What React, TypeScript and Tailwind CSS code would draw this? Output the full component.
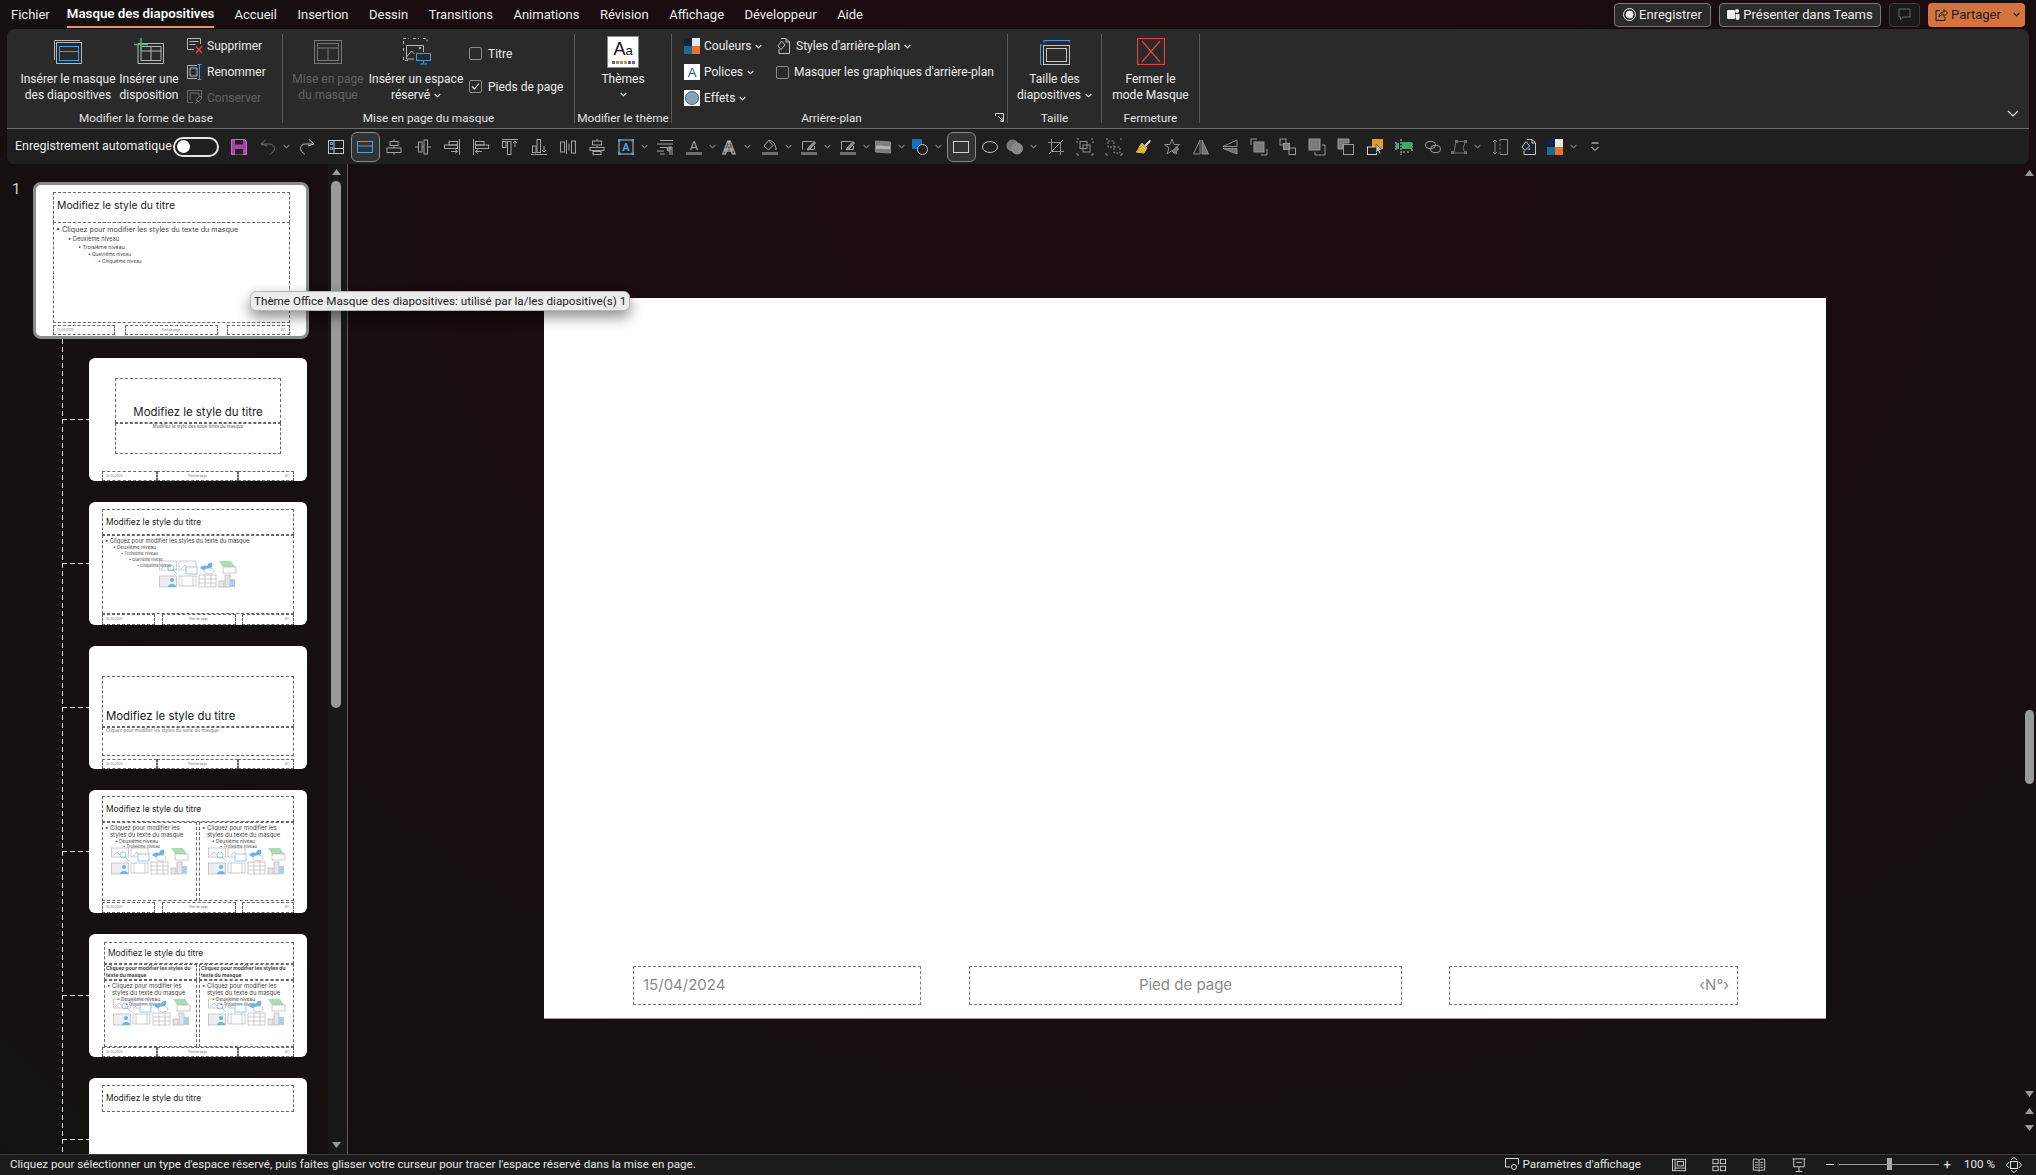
import type { ReactNode } from "react";

const tabs = ["Accueil", "Insertion", "Dessin", "Transitions", "Animations", "Révision", "Affichage", "Développeur", "Aide"];

const Ico = ({ children, size = 16, c = "#a3a3a3" }: { children: ReactNode; size?: number; c?: string }) => (
  <svg width={size} height={size} viewBox="0 0 16 16" fill="none" stroke={c} strokeWidth="1" className="shrink-0 overflow-visible">
    {children}
  </svg>
);

const Chevron = ({ c = "#e6e6e6" }: { c?: string }) => (
  <svg width="7" height="5" viewBox="0 0 7 5" fill="none" stroke={c} strokeWidth="1.1" className="shrink-0">
    <path d="M0.7 1l2.8 2.8L6.3 1" />
  </svg>
);

const Bar = () => <rect x="0" y="13" width="16" height="3" fill="#6f6f6f" stroke="none" />;

const Pencil = () => (
  <>
    <path d="M1.5 10.5v-8h10M13.5 7v3.5h-7" />
    <path d="M7 9l6-6.5 1.5 1.5-6 6.5-2 .5z" fill="#888" />
    <Bar />
  </>
);

type Tool = { icon: ReactNode; cls?: string; chev?: string; on?: boolean };

const tools: Tool[] = [
  {
    icon: (
      <Ico c="#c66fc6">
        <path d="M.5.5h13l2 2v13H.5z" fill="#a544a5" />
        <rect x="4" y="1" width="8" height="4.5" fill="#1f1f1f" stroke="none" />
        <rect x="4" y="10" width="8" height="5.5" fill="#1f1f1f" stroke="none" />
      </Ico>
    ),
  },
  {
    icon: (
      <Ico c="#6f6f6f">
        <path d="M6 .5L1 5l6 2M1.5 5h8c3 0 5 2 5 4.5 0 2-2 4-4.5 6" />
      </Ico>
    ),
    chev: "w-[10px]",
  },
  {
    icon: (
      <Ico c="#bdbdbd">
        <path d="M10 .5L15 5l-6 2M14.5 5h-8c-3 0-5 2-5 4.5 0 2 2 4 4.5 6" />
      </Ico>
    ),
  },
  {
    icon: (
      <Ico c="#c4c4c4">
        <rect x=".5" y="1.5" width="15" height="13" />
        <path d="M6 1.5v13M6 9.5h9.5" />
        <rect x="2.5" y="3.5" width="2" height="2" stroke="#4aa3e0" />
        <rect x="2.5" y="8.5" width="2" height="2" stroke="#4aa3e0" />
      </Ico>
    ),
  },
  {
    icon: (
      <Ico c="#4aa3e0">
        <rect x=".5" y="2.5" width="15" height="11" />
        <path d="M.5 7h15" />
      </Ico>
    ),
    on: true,
  },
  {
    icon: (
      <Ico>
        <path d="M8 0v16" />
        <rect x="4" y="2.5" width="8" height="4" fill="#1f1f1f" />
        <rect x="1" y="9" width="14" height="4.5" fill="#1f1f1f" />
      </Ico>
    ),
  },
  {
    icon: (
      <Ico>
        <path d="M0 8h16" />
        <rect x="3.5" y="3" width="3.5" height="10" fill="#1f1f1f" />
        <rect x="9" y="1" width="3.5" height="14" fill="#1f1f1f" />
      </Ico>
    ),
  },
  {
    icon: (
      <Ico>
        <path d="M15.5 0v16" />
        <rect x="5" y="2.5" width="8.5" height="3.5" />
        <rect x="0.5" y="6" width="13" height="3.5" />
        <path d="M7 12.5h6.5M11 10.5l2.5 2-2.5 2" />
      </Ico>
    ),
  },
  {
    icon: (
      <Ico>
        <path d="M.5 0v16" />
        <rect x="2.5" y="2.5" width="8.5" height="3.5" />
        <rect x="2.5" y="6" width="13" height="3.5" />
        <path d="M9 12.5H2.5M5 10.5l-2.5 2 2.5 2" />
      </Ico>
    ),
  },
  {
    icon: (
      <Ico>
        <path d="M0 .5h16" />
        <rect x=".5" y="2.5" width="3.5" height="6" />
        <rect x="5.5" y="2.5" width="3.5" height="13" />
        <path d="M13 8V2M11 4l2-2 2 2" />
      </Ico>
    ),
  },
  {
    icon: (
      <Ico>
        <path d="M0 15.5h16" />
        <rect x="1.5" y="7" width="3.5" height="6.5" />
        <rect x="6" y=".5" width="3.5" height="13" />
        <path d="M13 7v6M11 11l2 2 2-2" />
      </Ico>
    ),
  },
  {
    icon: (
      <Ico>
        <rect x=".5" y="3" width="4" height="10" />
        <rect x="11.5" y="2" width="4" height="12" />
        <path d="M6.5 1v14M9 4.5v7" />
      </Ico>
    ),
  },
  {
    icon: (
      <Ico>
        <path d="M8 0v2M8 7v2M8 15v1" />
        <rect x="3.5" y="2" width="9" height="4" />
        <rect x="1" y="8.5" width="14" height="3" />
        <rect x="4" y="12.5" width="8" height="3" />
      </Ico>
    ),
  },
  {
    icon: (
      <Ico c="#bbbbbb">
        <rect x="1" y="1" width="14" height="14" />
        <text x="8" y="12" textAnchor="middle" fontSize="11" fontWeight="700" fill="#4aa3e0" stroke="none">A</text>
        <g fill="#4aa3e0" stroke="none">
          <rect x="0" y="0" width="2.5" height="2.5" />
          <rect x="13.5" y="0" width="2.5" height="2.5" />
          <rect x="0" y="13.5" width="2.5" height="2.5" />
          <rect x="13.5" y="13.5" width="2.5" height="2.5" />
        </g>
      </Ico>
    ),
    chev: "w-[10px]",
  },
  {
    icon: (
      <Ico>
        <path d="M3 1.5h13M0 5h16M3 8.5h7M0 12h7M3 15h5" />
        <path d="M15 8v8M13 8v8M15 8h-3a2 2 0 000 4h1" fill="#777" />
      </Ico>
    ),
  },
  {
    icon: (
      <Ico>
        <text x="8" y="11" textAnchor="middle" fontSize="13" fill="#a3a3a3" stroke="none">A</text>
        <Bar />
      </Ico>
    ),
    chev: "w-[6px]",
  },
  {
    icon: (
      <Ico>
        <text x="8" y="14.5" textAnchor="middle" fontSize="19" fontWeight="700" fill="#555" stroke="#b5b5b5" strokeWidth=".8">A</text>
      </Ico>
    ),
    chev: "w-[12px]",
  },
  {
    icon: (
      <Ico>
        <path d="M6.5 1.5L2 7l4.5 4L11 6.5z" />
        <path d="M7 1.5c3 0 6 2 6.5 6.5" />
        <path d="M13.5 8c.8 1 1.2 1.8 0 3" fill="#a3a3a3" />
        <Bar />
      </Ico>
    ),
    chev: "w-[10px]",
  },
  {
    icon: (
      <Ico>
        <Pencil />
      </Ico>
    ),
    chev: "w-[10px]",
  },
  {
    icon: (
      <Ico>
        <Pencil />
      </Ico>
    ),
    chev: "w-[6px]",
  },
  {
    icon: (
      <Ico c="#8a8a8a">
        <path d="M.5 2L15.5 3v11L.5 13z" fill="#7d7d7d" />
        <path d="M1 7c3-2 7 1 14 0v3c-5 1-10-1-14 0z" fill="#b3b3b3" stroke="none" />
      </Ico>
    ),
    chev: "w-[8px]",
  },
  {
    icon: (
      <Ico c="#c4c4c4">
        <rect x="0" y="0" width="10" height="10" fill="#1270c9" stroke="none" />
        <circle cx="10.5" cy="10.5" r="5" fill="#1f1f1f" />
      </Ico>
    ),
    chev: "w-[12px]",
  },
  {
    icon: (
      <Ico c="#cfcfcf">
        <rect x=".5" y="2.5" width="15" height="11" />
      </Ico>
    ),
    on: true,
  },
  {
    icon: (
      <Ico c="#bdbdbd">
        <ellipse cx="8" cy="8" rx="7.5" ry="5.5" />
      </Ico>
    ),
  },
  {
    icon: (
      <Ico c="#8a8a8a">
        <circle cx="5.5" cy="6.5" r="5.5" fill="#777" />
        <circle cx="10" cy="9.5" r="5.5" fill="#888" />
      </Ico>
    ),
    cls: "-ml-[4px]",
    chev: "w-[12px]",
  },
  {
    icon: (
      <Ico c="#8f8f8f">
        <path d="M3.5 0v12.5H16M0 3.5h12.5V16M1 15L15 1" />
      </Ico>
    ),
  },
  {
    icon: (
      <Ico c="#8f8f8f">
        <rect x="3" y="2.5" width="7" height="7" />
        <rect x="6" y="6" width="7" height="7" />
        <path d="M0 0h2M14 0h2M0 14v2h2M14 16h2v-2M0 2v2M16 2v2" />
      </Ico>
    ),
  },
  {
    icon: (
      <Ico c="#8f8f8f">
        <rect x="2" y="2" width="6" height="6" strokeDasharray="2 1.5" />
        <rect x="8" y="8" width="6" height="6" strokeDasharray="2 1.5" />
        <path d="M0 0h2M14 0h2M0 14v2h2M14 16h2v-2" />
      </Ico>
    ),
  },
  {
    icon: (
      <Ico c="#cfcfcf">
        <path d="M10 6l5-5 0 2-4.5 4.5z" fill="#cfcfcf" />
        <path d="M7 4l5 5-3 5-8-1c3-2 3-6 6-9z" fill="#e2b23c" stroke="#e2b23c" />
        <path d="M6 6l4 4" stroke="#fff" />
      </Ico>
    ),
  },
  {
    icon: (
      <Ico c="#8f8f8f">
        <path d="M8 0l2 5.5h5.5L11 9l1.8 6L8 11.5 3 15l2-6L.5 5.5H6z" />
        <path d="M8 12l5-4 1.5 2-4 4.5z" fill="#6f6f6f" />
      </Ico>
    ),
  },
  {
    icon: (
      <Ico c="#8f8f8f">
        <path d="M7 1L.5 15H7z" />
        <path d="M9 1l6.5 14H9z" fill="#6f6f6f" />
      </Ico>
    ),
  },
  {
    icon: (
      <Ico c="#8f8f8f">
        <path d="M15 1L1 7.5h14z" />
        <path d="M15 9.5L1 9.5 15 15z" fill="#6f6f6f" />
      </Ico>
    ),
  },
  {
    icon: (
      <Ico c="#9a9a9a">
        <path d="M0 6V0h6M10 16h6v-6" />
        <rect x="3" y="3" width="10" height="10" fill="#7a7a7a" />
      </Ico>
    ),
  },
  {
    icon: (
      <Ico c="#9a9a9a">
        <rect x="0" y="0" width="6" height="6" />
        <rect x="3.5" y="4.5" width="6" height="6" fill="#7a7a7a" />
        <rect x="9" y="9" width="6.5" height="6.5" />
      </Ico>
    ),
  },
  {
    icon: (
      <Ico c="#9a9a9a">
        <rect x="0" y="0" width="11" height="11" fill="#7a7a7a" />
        <path d="M13 6h3v10H6v-3" />
      </Ico>
    ),
  },
  {
    icon: (
      <Ico c="#9a9a9a">
        <path d="M0 10V0h11v4H5v6z" fill="#7a7a7a" />
        <rect x="5.5" y="5.5" width="10" height="10" />
      </Ico>
    ),
  },
  {
    icon: (
      <Ico c="#d0d0d0">
        <rect x="5" y="0" width="11" height="10" fill="#e59a2d" stroke="none" />
        <rect x=".5" y="8" width="9" height="7.5" fill="#1f1f1f" />
        <path d="M9 5l6 6-2.5.3 1.5 3-1.5.7-1.5-3-2 2z" fill="#bdbdbd" stroke="#1f1f1f" strokeWidth=".5" />
      </Ico>
    ),
  },
  {
    icon: (
      <Ico c="#d0d0d0">
        <path d="M5 0v16M0 3v9M16 4v8M8 12v2M12 12v2" strokeDasharray="2 1" />
        <rect x="6" y="3" width="10" height="7" fill="#3eaa62" stroke="none" />
        <rect x="0" y="4" width="3" height="6" fill="#3eaa62" stroke="none" />
      </Ico>
    ),
  },
  {
    icon: (
      <Ico c="#9a9a9a">
        <rect x=".5" y="2.5" width="10" height="7" rx="3.5" />
        <rect x="5.5" y="6.5" width="10" height="7" rx="3.5" />
      </Ico>
    ),
  },
  {
    icon: (
      <Ico c="#6f6f6f">
        <path d="M3 13.5L5 2.5h8M14 4l-2 5 2 5H3" />
        <g fill="#6f6f6f" stroke="none">
          <rect x="0" y="12" width="3" height="3" />
          <rect x="4" y="1" width="3" height="3" />
          <rect x="13" y="1" width="3" height="3" />
          <rect x="13" y="12" width="3" height="3" />
        </g>
      </Ico>
    ),
    cls: "-ml-[3px]",
    chev: "w-[12px]",
  },
  {
    icon: (
      <Ico c="#8a8a8a">
        <path d="M3 1v14M1 3l2-2 2 2M1 13l2 2 2-2" />
        <path d="M8 .5h7.5v15H8" />
        <path d="M8 .5v15" strokeDasharray="2 2" />
      </Ico>
    ),
  },
  {
    icon: (
      <Ico c="#c4c4c4">
        <path d="M7 .5h5l3.5 3.5v11.500H4V12" />
        <path d="M12 .5V4h3.5" />
        <path d="M6 2.5L2 8l3 3.500L9.5 7z" fill="#1f1f1f" />
        <path d="M7 11l3-3 .5 3z" fill="#2f8fe0" stroke="none" />
      </Ico>
    ),
    cls: "-ml-[1px]",
  },
  {
    icon: (
      <Ico c="#8a8a8a">
        <rect x="0" y="0" width="8" height="8" fill="#12233b" stroke="none" />
        <rect x="8" y="0" width="8" height="8" fill="#e8e8e8" stroke="none" />
        <rect x="0" y="8" width="8" height="8" fill="#1a6a94" stroke="none" />
        <rect x="8" y="8" width="8" height="8" fill="#e8722d" stroke="none" />
      </Ico>
    ),
    cls: "-ml-[2px]",
    chev: "w-[11px]",
  },
  {
    icon: (
      <Ico c="#e6e6e6">
        <path d="M4.5 4h7M4.500 8l3.500 3.5L11.500 8" />
      </Ico>
    ),
  },
];

const RibbonBtn = ({ icon, lines, cls, dim, chevron }: { icon: ReactNode; lines: string[]; cls: string; dim?: boolean; chevron?: boolean }) => (
  <div className={`flex shrink-0 flex-col items-center pt-[6px] ${cls}`}>
    <div className="flex h-[24px] items-center justify-center">{icon}</div>
    <div className={`mt-[7px] text-center leading-[16px] ${dim ? "text-[#626262]" : "text-[#ececec]"}`}>
      {lines.map((l, i) => (
        <div key={i} className="flex items-center justify-center gap-[4px] whitespace-nowrap">
          {l}
          {chevron && i === lines.length - 1 && <Chevron />}
        </div>
      ))}
    </div>
  </div>
);

const SmallBtn = ({ icon, label, dim, chevron }: { icon: ReactNode; label: string; dim?: boolean; chevron?: boolean }) => (
  <div className={`flex h-[24px] items-center gap-[4px] whitespace-nowrap ${dim ? "text-[#626262]" : "text-[#ececec]"}`}>
    {icon}
    {label}
    {chevron && <Chevron />}
  </div>
);

const Check = ({ on }: { on?: boolean }) => (
  <div className="flex h-[13px] w-[13px] shrink-0 items-center justify-center rounded-[2px] border border-[#8c8c8c]">
    {on && (
      <svg width="9" height="9" viewBox="0 0 9 9" fill="none" stroke="#eee" strokeWidth="1.1">
        <path d="M1 4.5l2.5 2.5L8 1.5" />
      </svg>
    )}
  </div>
);

const Group = ({ label, cls, children, labelCls }: { label: string; cls: string; children: ReactNode; labelCls?: string }) => (
  <div className={`mt-[5px] flex h-[89px] shrink-0 flex-col border-r border-[#5a5a5a] ${cls}`}>
    <div className="flex h-[78px] shrink-0">{children}</div>
    <div className={`h-[13px] shrink-0 whitespace-nowrap text-center text-[11.8px] leading-[13px] text-[#e2e2e2] ${labelCls ?? ""}`}>{label}</div>
  </div>
);

const Ribbon = () => (
  <div className="mx-[7px] h-[135px] w-[2022px] overflow-hidden rounded-lg bg-[#2a2a2a] text-[12px]">
    <div className="flex h-[99px]">
      <Group label="Modifier la forme de base" cls="w-[276px]" labelCls="pl-[3px]">
        <div className="flex pl-[13px]">
          <RibbonBtn
            cls="w-[96px]"
            lines={["Insérer le masque", "des diapositives"]}
            icon={
              <svg width="28" height="24" viewBox="0 0 28 24" fill="none" stroke="#b5b5b5">
                <path d="M.5 20V.5H26" />
                <rect x="2.5" y="2.5" width="25" height="21" />
                <rect x="5.5" y="6.5" width="19" height="5" stroke="#3d9de6" />
                <rect x="5.5" y="11.5" width="19" height="9" stroke="#3d9de6" />
              </svg>
            }
          />
          <RibbonBtn
            cls="ml-[3px] w-[60px]"
            lines={["Insérer une", "disposition"]}
            icon={
              <svg width="30" height="27" viewBox="0 0 30 27" fill="none" stroke="#b5b5b5" className="-mt-[4px]">
                <path d="M4 26.5v-20h25.500v20H4zM7 23.500v-14h20v14zM17 9.500v14M7 14h20" />
                <path d="M7 1v13M0 7.500h14" stroke="#4cb56a" strokeWidth="1.5" />
              </svg>
            }
          />
          <div className="ml-[8px] flex flex-col gap-[2px]">
            <SmallBtn
              label="Supprimer"
              icon={
                <svg width="16" height="16" viewBox="0 0 16 16" fill="none" stroke="#b5b5b5">
                  <path d="M.5 11.5V.5h13V6M7 11.5H.5M2.5 3.5h9M2.5 6.5h6" />
                  <path d="M9 8.5l6 6.5M15 8.5l-6 6.5" stroke="#e0453f" strokeWidth="1.3" />
                </svg>
              }
            />
            <SmallBtn
              label="Renommer"
              icon={
                <svg width="16" height="16" viewBox="0 0 16 16" fill="none" stroke="#b5b5b5">
                  <path d="M10 1.5H.5v13H10M3 4h7M3 12h7V4M3 4v8" />
                  <path d="M10.5 .5h4M10.5 15.5h4M12.5 .5v15" stroke="#3d9de6" />
                </svg>
              }
            />
            <SmallBtn
              dim
              label="Conserver"
              icon={
                <svg width="16" height="16" viewBox="0 0 16 16" fill="none" stroke="#6a6a6a">
                  <path d="M.5 12.5V.5h14v8M6 12.5H.5M3 3h9v4M3 10V3" />
                  <path d="M8 14l2.5-2.5M8.5 9l5 4M13 6l2 2-4 4-2-2z" />
                </svg>
              }
            />
          </div>
        </div>
      </Group>
      <Group label="Mise en page du masque" cls="w-[292px]">
        <div className="flex pl-[9px]">
          <RibbonBtn
            dim
            cls="w-[72px]"
            lines={["Mise en page", "du masque"]}
            icon={
              <svg width="28" height="24" viewBox="0 0 28 24" fill="none" stroke="#777">
                <rect x=".5" y=".5" width="27" height="23" />
                <rect x="3.5" y="3.5" width="21" height="17" />
                <path d="M3.5 8h21M14 8v12.500" />
              </svg>
            }
          />
          <RibbonBtn
            chevron
            cls="ml-[6px] w-[92px]"
            lines={["Insérer un espace", "réservé"]}
            icon={
              <svg width="28" height="27" viewBox="0 0 28 27" fill="none" stroke="#b5b5b5" className="-mt-[2px] ml-[2px]">
                <path d="M.5 6V.5h5M10 .5h6M20 .5h4v3M.5 10v5M.5 19v3.5h5" strokeDasharray="3 2" />
                <path d="M3.5 21V7.5h17V14M3.5 19l5-6 3 3M11 21H3.5" />
                <circle cx="17" cy="10" r="1.2" fill="#b5b5b5" stroke="none" />
                <rect x="13.5" y="15.5" width="14" height="7" stroke="#3d9de6" />
                <path d="M20.5 22.5v3M17 26h7" stroke="#3d9de6" />
              </svg>
            }
          />
          <div className="ml-[7px] flex flex-col gap-[20px] pt-[13px]">
            <div className="flex h-[13px] items-center gap-[6px] text-[#ececec]">
              <Check />
              Titre
            </div>
            <div className="flex h-[13px] items-center gap-[6px] whitespace-nowrap text-[#ececec]">
              <Check on />
              Pieds de page
            </div>
          </div>
        </div>
      </Group>
      <Group label="Modifier le thème" cls="w-[97px]">
        <div className="flex w-full flex-col items-center pt-[2px]">
          <div className="flex h-[32px] w-[32px] flex-col items-center border border-[#8a8a8a] bg-white text-[#111]">
            <div className="mt-[2px] text-[18px] leading-[21px] font-['Liberation_Sans',sans-serif]">
              A<span className="text-[13px]">a</span>
            </div>
            <div className="flex gap-[1px]">
              <div className="h-[3px] w-[3px] bg-[#3f7a3f]" />
              <div className="h-[3px] w-[3px] bg-[#d87a2b]" />
              <div className="h-[3px] w-[3px] bg-[#8f8f8f]" />
              <div className="h-[3px] w-[3px] bg-[#c9a227]" />
              <div className="h-[3px] w-[3px] bg-[#8a3fa0]" />
              <div className="h-[3px] w-[3px] bg-[#3f7ab5]" />
            </div>
          </div>
          <div className="mt-[3px] leading-[16px] text-[#ececec]">Thèmes</div>
          <div className="mt-[5px]">
            <Chevron />
          </div>
        </div>
      </Group>
      <Group label="Arrière-plan" cls="relative w-[336px]" labelCls="pr-[16px]">
        <div className="flex w-full pl-[12px]">
          <div className="flex w-[92px] flex-col gap-[2px]">
            <SmallBtn
              chevron
              label="Couleurs"
              icon={
                <svg width="16" height="16" viewBox="0 0 16 16">
                  <rect width="8" height="8" fill="#12233b" />
                  <rect x="8" width="8" height="8" fill="#e8e8e8" />
                  <rect y="8" width="8" height="8" fill="#1a6a94" />
                  <rect x="8" y="8" width="8" height="8" fill="#e8722d" />
                </svg>
              }
            />
            <SmallBtn
              chevron
              label="Polices"
              icon={
                <svg width="16" height="16" viewBox="0 0 16 16">
                  <rect width="16" height="16" fill="#fff" />
                  <text x="8" y="13" textAnchor="middle" fontSize="13" fill="#1a4ea0" fontFamily="Liberation Sans">A</text>
                </svg>
              }
            />
            <SmallBtn
              chevron
              label="Effets"
              icon={
                <svg width="16" height="16" viewBox="0 0 16 16">
                  <rect width="16" height="16" fill="#fff" />
                  <circle cx="8" cy="8" r="6.5" fill="#8aa2b5" stroke="#46617a" />
                </svg>
              }
            />
          </div>
          <div className="flex flex-col gap-[2px]">
            <SmallBtn
              chevron
              label="Styles d'arrière-plan"
              icon={
                <svg width="16" height="16" viewBox="0 0 16 16" fill="none" stroke="#c4c4c4">
                  <path d="M5 .5h5L13.5 4v11.5H3V11" />
                  <path d="M10 .5V4h3.5M5.5 3L2 8l3 3.500L9 7z" />
                </svg>
              }
            />
            <div className="flex h-[24px] items-center gap-[5px] whitespace-nowrap text-[#ececec]">
              <Check />
              Masquer les graphiques d'arrière-plan
            </div>
          </div>
        </div>
        <svg width="9" height="9" viewBox="0 0 9 9" fill="none" stroke="#cfcfcf" className="absolute bottom-[1px] right-[3px]">
          <path d="M.5 3V.5h8v8H6M3 3l5 5M8 5v3H5" />
        </svg>
      </Group>
      <Group label="Taille" cls="w-[94px]">
        <RibbonBtn
          chevron
          cls="w-full"
          lines={["Taille des", "diapositives"]}
          icon={
            <svg width="30" height="25" viewBox="0 0 30 25" fill="none" stroke="#c4c4c4">
              <path d="M4 .5h26M4 0v3M30 0v3M.5 5v20M0 5h2M0 25h2" stroke="#3d9de6" />
              <rect x="3.5" y="5.5" width="26" height="19" />
              <rect x="6.5" y="8.5" width="20" height="13" />
            </svg>
          }
        />
      </Group>
      <Group label="Fermeture" cls="w-[98px]">
        <RibbonBtn
          cls="w-full"
          lines={["Fermer le", "mode Masque"]}
          icon={
            <svg width="28" height="27" viewBox="0 0 28 27" fill="none" stroke="#e0443f" strokeWidth="1.2" className="-mt-[2px]">
              <rect x=".5" y=".5" width="27" height="26" />
              <path d="M5 3l18 21M23 3L5 24" />
            </svg>
          }
        />
      </Group>
      <div className="flex flex-1 items-end justify-end pb-[11px] pr-[10px]">
        <svg width="12" height="7" viewBox="0 0 12 7" fill="none" stroke="#e6e6e6" strokeWidth="1.2">
          <path d="M1 1l5 5 5-5" />
        </svg>
      </div>
    </div>
    <div className="flex h-[36px] items-center border-t border-[#6a6a6a] bg-[#1f1f1f] pl-[8px]">
      <div className="w-[158px] shrink-0 whitespace-nowrap text-[12.4px] text-[#ececec]">Enregistrement automatique</div>
      <div className="flex h-[20px] w-[46px] shrink-0 items-center rounded-full border-2 border-[#e6e6e6] px-[2px]">
        <div className="h-[13px] w-[13px] rounded-full bg-white" />
      </div>
      <div className="ml-[5.5px] flex items-center">
        {tools.map((t, i) => (
          <div key={i} className="flex shrink-0 items-center">
            <div className={`flex h-[30px] w-[29px] items-center justify-center ${t.cls ?? ""} ${t.on ? "rounded-md border border-[#8a8a8a] bg-[#333]" : ""}`}>{t.icon}</div>
            {t.chev && (
              <div className={`flex ${t.chev}`}>
                <Chevron c="#7c7c7c" />
              </div>
            )}
          </div>
        ))}
      </div>
    </div>
  </div>
);

const TopBar = () => (
  <div className="flex h-[29px] items-center px-[11px] text-[13px] text-[#ececec]">
    <span>Fichier</span>
    <div className="ml-[17px] flex h-[26px] items-center border-b-2 border-[#e0906a] text-[13.3px] font-semibold text-white">Masque des diapositives</div>
    <div className="ml-[20px] flex gap-[20.5px]">
      {tabs.map((t) => (
        <span key={t}>{t}</span>
      ))}
    </div>
    <div className="ml-auto flex items-center gap-[8px]">
      <div className="flex h-[24px] w-[97px] items-center justify-center gap-[3px] rounded-[4px] border border-[#777] bg-[#2b2b2b]">
        <svg width="13" height="13" viewBox="0 0 13 13" fill="none" stroke="#eee">
          <circle cx="6.5" cy="6.5" r="6" />
          <circle cx="6.5" cy="6.5" r="3.5" fill="#eee" />
        </svg>
        Enregistrer
      </div>
      <div className="flex h-[24px] w-[162px] items-center justify-center gap-[3px] rounded-[4px] border border-[#777] bg-[#2b2b2b]">
        <svg width="13" height="13" viewBox="0 0 13 13" fill="#eee">
          <rect x="0" y="2" width="8" height="9" rx="1" />
          <circle cx="10" cy="3" r="2" />
          <path d="M8.5 6h4v4a2 2 0 01-4 0z" />
        </svg>
        Présenter dans Teams
      </div>
      <div className="flex h-[24px] w-[31px] items-center justify-center rounded-[4px] border border-[#3c3c3c] bg-[#1a1a1a]">
        <svg width="13" height="13" viewBox="0 0 13 13" fill="none" stroke="#666">
          <path d="M1 1h11v8H5l-2.5 3V9H1z" />
        </svg>
      </div>
      <div className="flex h-[24px] w-[97px] items-center gap-[3px] rounded-[4px] bg-[#d4733f] pl-[7px] text-[#1c1c1c]">
        <svg width="13" height="13" viewBox="0 0 13 13" fill="none" stroke="#1c1c1c">
          <path d="M5 2.5H1v10h9V9M4 9c0-3 2-5 5-5V1.5l3.5 3.5L9 8.5V6.500C7 6.500 5 7 4 9z" />
        </svg>
        Partager
        <div className="ml-auto pr-[5px]">
          <Chevron c="#1c1c1c" />
        </div>
      </div>
    </div>
  </div>
);

const ContentIcons = () => (
  <svg width="78" height="28" viewBox="0 0 78 28" fill="none" stroke="#b5b5b5" strokeWidth=".7" className="shrink-0">
    <rect x=".5" y="1" width="17" height="9" />
    <path d="M2 9l4-4 3 3" />
    <circle cx="12" cy="8" r="3" stroke="#6bb2e8" />
    <path d="M14 10l4 4" stroke="#6bb2e8" />
    <rect x="20" y="1" width="17" height="9" />
    <path d="M22 9l4-4 3 3" />
    <rect x="27" y="7" width="11" height="7" stroke="#6bb2e8" fill="#fff" />
    <path d="M41 8c2-3 5-3 7-2 1-3 3-4 5-3 1 2 0 5-3 6-3 2-7 1-9-1z" fill="#6bb2e8" stroke="none" />
    <ellipse cx="50" cy="11" rx="5" ry="3" fill="#fff" />
    <path d="M60 1h12l4 6H64z" fill="#a8dcb4" stroke="none" />
    <rect x="64" y="7" width="13" height="6" fill="#fff" />
    <rect x=".5" y="16" width="17" height="11" fill="#eee" />
    <circle cx="13" cy="20" r="2" fill="#6bb2e8" stroke="none" />
    <path d="M9 27c0-4 8-4 8 0z" fill="#6bb2e8" stroke="none" />
    <rect x="20" y="16" width="17" height="10" />
    <path d="M23 16v10M34 16v10" />
    <rect x="40" y="15" width="17" height="12" />
    <path d="M46 15v12M52 15v12M40 19h17M40 23h17" />
    <rect x="60" y="21" width="5" height="6" fill="#e6e6e6" />
    <rect x="66" y="15" width="5" height="12" fill="#e6e6e6" />
    <rect x="71" y="19" width="5" height="8" fill="#a7d0f0" stroke="none" />
  </svg>
);

const Dash = "border border-dashed border-[#666]";

const FootRow = ({ big }: { big?: boolean }) => (
  <div className={`mt-auto flex shrink-0 justify-between text-[3px] leading-none text-[#777] ${big ? "h-[10px]" : "h-[11px]"}`}>
    <div className={`flex items-center pl-[3px] ${Dash} ${big ? "w-[62px]" : "w-[53px]"}`}>15/04/2024</div>
    <div className={`flex items-center justify-center ${Dash} ${big ? "w-[93px]" : "w-[74px]"}`}>Pied de page</div>
    <div className={`flex items-center justify-end pr-[3px] ${Dash} ${big ? "w-[63px]" : "w-[52px]"}`}>‹N°›</div>
  </div>
);

const Levels = ({ big }: { big?: boolean }) => (
  <div className={`pl-[2px] pt-[2px] whitespace-nowrap text-[#444] ${big ? "text-[7.2px] leading-[9px]" : "text-[5.7px] leading-[6.3px]"}`}>
    <div>• Cliquez pour modifier les styles du texte du masque</div>
    <div className={big ? "pl-[12px] text-[5.7px]" : "pl-[8px] text-[4.8px]"}>• Deuxième niveau</div>
    <div className={big ? "pl-[22px] text-[5.3px] leading-[8px]" : "pl-[16px] text-[4.2px]"}>• Troisième niveau</div>
    <div className={big ? "pl-[32px] text-[4.7px] leading-[7px]" : "pl-[24px] text-[3.7px]"}>• Quatrième niveau</div>
    <div className={big ? "pl-[42px] text-[4.7px] leading-[7px]" : "pl-[32px] text-[3.7px]"}>• Cinquième niveau</div>
  </div>
);

const Col = ({ cls, head }: { cls: string; head?: boolean }) => (
  <div className={`relative overflow-hidden whitespace-nowrap text-[#444] ${Dash} ${cls}`}>
    <div className="pl-[2px] pt-[1px] text-[5.9px] leading-[7px]">
      <div>• Cliquez pour modifier les</div>
      <div className="pl-[5px]">styles du texte du masque</div>
      <div className="pl-[10px] text-[4.8px] leading-[6px]">• Deuxième niveau</div>
      <div className="pl-[18px] text-[4.2px] leading-[6px]">• Troisième niveau</div>
    </div>
    <div className={`absolute left-[8px] ${head ? "top-[17px]" : "top-[24px]"}`}>
      <ContentIcons />
    </div>
  </div>
);

const TitleBox = ({ cls, text = "text-[8.4px]" }: { cls: string; text?: string }) => (
  <div className={`flex shrink-0 items-center whitespace-nowrap pl-[3px] text-[#222] ${Dash} ${cls} ${text}`}>Modifiez le style du titre</div>
);

const Row = ({ children, cls }: { children: ReactNode; cls: string }) => (
  <div className="relative mb-[21px] h-[123px] pl-[89px]">
    <div className="absolute left-[62px] top-[61px] h-px w-[27px] bg-[repeating-linear-gradient(to_right,#ddd_0_5px,transparent_5px_8px)]" />
    <div className={`flex h-[123px] w-[218px] flex-col overflow-hidden rounded-md bg-white px-[13px] ${cls}`}>{children}</div>
  </div>
);

const Thumbs = () => (
  <div className="relative flex-1 overflow-hidden pt-[18px] font-['Inter',sans-serif]">
    <div className="absolute bottom-0 left-[62px] top-[175px] w-px bg-[repeating-linear-gradient(to_bottom,#ddd_0_5px,transparent_5px_8px)]" />
    <div className="mb-[19px] flex">
      <div className="w-[33px] pl-[12px] text-[15px] leading-[14px] text-[#cfcfcf] font-['Roboto',sans-serif]">1</div>
      <div className="flex h-[157px] w-[276px] flex-col rounded-lg border-[3px] border-[#8c8c8c] bg-white pl-[17px] pr-[16px] pt-[7px] pb-[1px]">
        <TitleBox cls="h-[31px] pb-[3px]" text="text-[10.4px]" />
        <div className={`-mt-px h-[101px] shrink-0 ${Dash}`}>
          <Levels big />
        </div>
        <FootRow big />
      </div>
    </div>
    <Row cls="pt-[20px]">
      <div className="mx-[13px]">
        <div className={`flex h-[45px] items-end justify-center pb-[3px] text-[11.4px] leading-[13px] text-[#222] ${Dash}`}>Modifiez le style du titre</div>
        <div className={`h-[31px] text-center text-[4.4px] leading-[6px] text-[#555] ${Dash}`}>Modifiez le style des sous-titres du masque</div>
      </div>
      <FootRow big />
    </Row>
    <Row cls="pt-[7px]">
      <TitleBox cls="h-[26px]" />
      <div className={`relative h-[79px] shrink-0 ${Dash}`}>
        <Levels />
        <div className="absolute left-[56px] top-[24px]">
          <ContentIcons />
        </div>
      </div>
      <FootRow />
    </Row>
    <Row cls="pt-[30px]">
      <div className={`flex h-[51px] shrink-0 items-end whitespace-nowrap pb-[3px] pl-[3px] text-[11.4px] leading-[13px] text-[#111] ${Dash}`}>Modifiez le style du titre</div>
      <div className={`h-[29px] shrink-0 pl-[3px] text-[4.6px] leading-[6px] text-[#777] ${Dash}`}>Cliquez pour modifier les styles du texte du masque</div>
      <FootRow big />
    </Row>
    <Row cls="pt-[6px]">
      <TitleBox cls="h-[26px]" />
      <div className="flex h-[79px] shrink-0 gap-[2px]">
        <Col cls="w-[95px]" />
        <Col cls="w-[95px]" />
      </div>
      <FootRow />
    </Row>
    <Row cls="pt-[8px]">
      <TitleBox cls="ml-[2px] h-[22px]" />
      <div className="ml-[2px] flex h-[16px] shrink-0 gap-[2px] text-[5px] font-bold leading-[6.5px] text-[#444]">
        <div className={`w-[93px] whitespace-nowrap pl-[1px] ${Dash}`}>
          Cliquez pour modifier les styles du
          <br />
          texte du masque
        </div>
        <div className={`w-[95px] whitespace-nowrap pl-[1px] ${Dash}`}>
          Cliquez pour modifier les styles du
          <br />
          texte du masque
        </div>
      </div>
      <div className="ml-[2px] flex h-[67px] shrink-0 gap-[2px]">
        <Col head cls="w-[93px]" />
        <Col head cls="w-[95px]" />
      </div>
      <FootRow big />
    </Row>
    <Row cls="pt-[7px]">
      <TitleBox cls="h-[27px]" />
    </Row>
  </div>
);

const Tri = ({ up = false, c = "#9a9a9a" }: { up?: boolean; c?: string }) => (
  <svg width="9" height="6" viewBox="0 0 9 6" fill={c} className="shrink-0">
    <path d={up ? "M4.5 0L9 6H0z" : "M0 0h9L4.5 6z"} />
  </svg>
);

const SlideBox = ({ cls, children }: { cls: string; children: ReactNode }) => (
  <div className={`flex h-[39px] shrink-0 items-center border border-dashed border-[#777] text-[15px] text-[#8a8a8a] ${cls}`}>{children}</div>
);

const Stage = () => (
  <div className="flex flex-1">
    <div className="flex-1 pl-[196px] pt-[134px]">
      <div className="flex h-[721px] w-[1282px] items-end border-b border-[#9a9a9a] bg-white pb-[13px] pl-[89px] font-['Inter',sans-serif]">
        <SlideBox cls="w-[288px] pl-[9px]">15/04/2024</SlideBox>
        <SlideBox cls="ml-[48px] w-[433px] justify-center">Pied de page</SlideBox>
        <SlideBox cls="ml-[47px] w-[289px] justify-end pr-[8px]">‹N°›</SlideBox>
      </div>
    </div>
    <div className="flex w-[12px] flex-col items-center pr-[2px] pt-[6px]">
      <Tri up />
      <div className="mt-[534px] h-[74px] w-[9px] rounded-full bg-[#9a9a9a]" />
      <div className="mt-[307px]">
        <Tri />
      </div>
      <div className="mt-[11px]">
        <Tri up />
      </div>
      <div className="mt-[11px]">
        <Tri />
      </div>
    </div>
  </div>
);

const StatusBar = () => (
  <div className="flex h-[21px] items-center border-t border-[#3a3a3a] bg-[#1b1b1b] pl-[10px] text-[11.6px] text-[#e6e6e6]">
    <span>Cliquez pour sélectionner un type d'espace réservé, puis faites glisser votre curseur pour tracer l'espace réservé dans la mise en page.</span>
    <div className="ml-auto flex items-center pr-[14px]">
      <svg width="14" height="13" viewBox="0 0 14 13" fill="none" stroke="#ddd">
        <path d="M.5 9V.5h13v6M.5 9H5" />
        <circle cx="9" cy="9" r="2.5" />
      </svg>
      <span className="ml-[4px] w-[124px] whitespace-nowrap">Paramètres d'affichage</span>
      <div className="ml-[25px] flex items-center gap-[26px]">
        <Ico size={14} c="#ddd">
          <rect x=".5" y="1.5" width="15" height="13" />
          <path d="M3.5 1.5v13M3.5 11.5h12" />
          <rect x="6" y="4" width="7" height="5" />
        </Ico>
        <Ico size={14} c="#ddd">
          <rect x="1" y="1.5" width="6" height="5" />
          <rect x="9.5" y="1.5" width="6" height="5" />
          <rect x="1" y="9.5" width="6" height="5" />
          <rect x="9.5" y="9.5" width="6" height="5" />
        </Ico>
        <Ico size={14} c="#ddd">
          <path d="M8 2.5C6 1 3 1 1.5 1.5v12.5c1.5-.5 4.5-.5 6.5 1 2-1.5 5-1.5 6.5-1V1.5C13 1 10 1 8 2.5zM8 2.5V15M3.5 5h3M3.5 8h3M3.5 11h3M9.5 5h3M9.5 8h3M9.5 11h3" />
        </Ico>
        <Ico size={14} c="#ddd">
          <path d="M.5 1h15M2 1v9h12V1M8 10v5M4 15.5h8M5 5h6" />
        </Ico>
      </div>
      <div className="ml-[20px] h-px w-[8px] bg-[#ddd]" />
      <div className="relative ml-[5px] h-px w-[100px] bg-[#9a9a9a]">
        <div className="absolute left-[48px] -top-[6px] h-[12px] w-[5px] bg-[#a8a8a8]" />
      </div>
      <div className="ml-[5px] text-[13px] leading-none">+</div>
      <span className="ml-[13px] w-[30px] whitespace-nowrap">100 %</span>
      <svg className="ml-[12px]" width="16" height="16" viewBox="0 0 16 16" fill="none" stroke="#ddd">
        <rect x="4.5" y="4.5" width="7" height="7" />
        <path d="M3 5L.5 8 3 11M13 5l2.5 3L13 11M5 3l3-2.5L11 3M5 13l3 2.5L11 13" />
      </svg>
    </div>
  </div>
);

export default function App() {
  return (
    <div className="relative flex h-[1175px] w-[2036px] flex-col overflow-hidden bg-[radial-gradient(ellipse_at_58%_12%,#1c0d11_0%,#180c0f_45%,#121310_100%)] font-['Roboto',sans-serif] text-[13px]">
      <TopBar />
      <Ribbon />
      <div className="flex h-[990px]">
        <div className="flex w-[348px] shrink-0 border-r border-[#5a5a5a]">
          <Thumbs />
          <div className="flex w-[19px] flex-col items-center bg-[#181818] pr-[3px] pt-[5px]">
            <Tri up />
            <div className="mt-[6px] h-[527px] w-[10px] rounded-full bg-[#9a9a9a]" />
            <div className="mt-auto pb-[6px]">
              <Tri />
            </div>
          </div>
        </div>
        <Stage />
      </div>
      <StatusBar />
      <div className="absolute left-[250px] top-[291px] whitespace-nowrap rounded-md border border-[#b5b5b5] bg-[#ececec] px-[3px] py-[1px] text-[11.7px] leading-[16px] text-[#222] shadow-[0_6px_14px_rgba(0,0,0,.45)]">
        Thème Office Masque des diapositives: utilisé par la/les diapositive(s) 1
      </div>
    </div>
  );
}
